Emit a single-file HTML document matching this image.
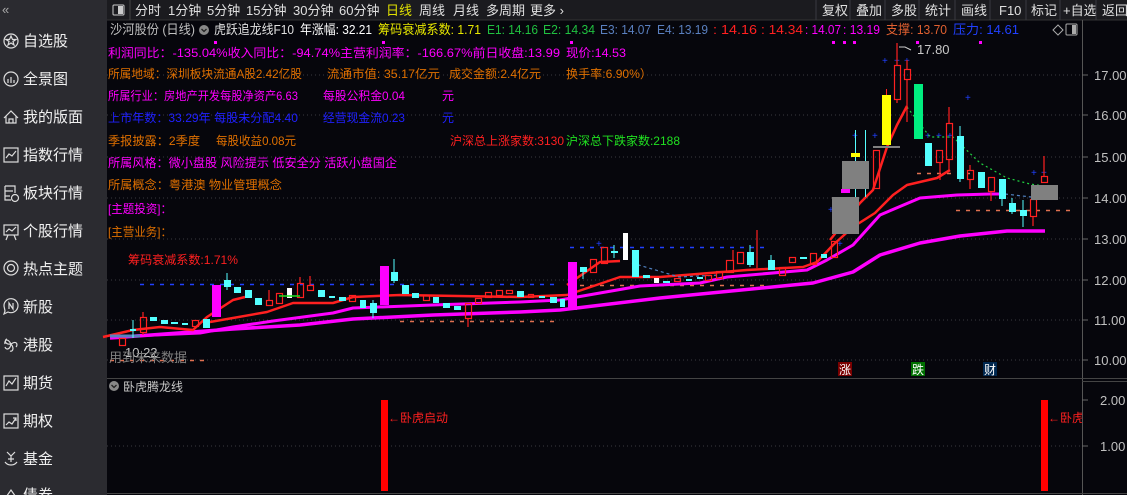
<!DOCTYPE html>
<html><head><meta charset="utf-8"><style>
html,body{margin:0;padding:0;background:#06060c;width:1127px;height:495px;overflow:hidden}
svg{display:block}
text{font-family:"Liberation Sans","Noto Sans CJK SC",sans-serif}
</style></head><body>
<svg width="1127" height="495" viewBox="0 0 1127 495" xmlns="http://www.w3.org/2000/svg">
<rect width="1127" height="495" fill="#06060c"/>
<!-- sidebar -->
<rect x="0" y="0" width="107" height="495" fill="#2b2b30"/>
<text x="2" y="14" font-size="13" fill="#aaa">«</text>
<g font-size="15" fill="#f0f0f0">
<text x="23" y="46">自选股</text><text x="23" y="84">全景图</text><text x="23" y="122">我的版面</text>
<text x="23" y="160">指数行情</text><text x="23" y="198">板块行情</text><text x="23" y="236">个股行情</text>
<text x="23" y="274">热点主题</text><text x="23" y="312">新股</text><text x="23" y="350">港股</text>
<text x="23" y="388">期货</text><text x="23" y="426">期权</text><text x="23" y="464">基金</text><text x="23" y="500">债券</text>
</g>
<g fill="none" stroke="#ddd" stroke-width="1.2">
<circle cx="11" cy="41" r="7"/><path d="M11 36l1.5 3.5h3.5l-3 2 1 3.5-3-2-3 2 1-3.5-3-2h3.5z"/>
<circle cx="11" cy="79" r="7"/><path d="M8 83v-4M11 83v-6M14 83v-3"/>
<path d="M4 118l7-7 7 7M6 116v7h10v-7M9 123v-4h4v4"/>
<rect x="4" y="148" width="14" height="14"/><path d="M6 158l3-4 3 2 4-5"/>
<path d="M5 186h10v7M5 186v14h6M5 191h8M5 196h5"/><circle cx="15" cy="198" r="3.5"/>
<rect x="4" y="225" width="14" height="10"/><path d="M6 232l3-3 3 2 4-4M8 235l-2 5M14 235l2 5"/>
<circle cx="11" cy="268" r="7"/><circle cx="11" cy="268" r="3.5"/>
<path d="M4 306a7 7 0 1 1 4 6l-4 2 1-3z"/><path d="M9 309v-6l4 6v-6"/>
<path d="M11 344c-4-7-7-3-6 0M11 344c6-4 7 1 5 3M11 344c-1 6-5 6-6 3M11 344c4 5 1 8-1 7M11 344c-6 1-7-4-4-5"/>
<rect x="4" y="376" width="14" height="14"/><path d="M6 386l3-5 3 3 4-6"/>
<rect x="4" y="414" width="14" height="14"/><path d="M6 425l3-3 3 2 4-6M13 418h3v3"/>
<path d="M7 452l4 4 4-4M11 456v6M8 459h6M5 462c3 4 9 4 12 0"/>
<path d="M4 500l7-10 7 10"/>
</g>
<!-- top toolbar -->
<rect x="107" y="0" width="1020" height="20" fill="#1b1b1f"/>
<line x1="107" y1="20" x2="1127" y2="20" stroke="#333"/>
<rect x="113" y="5" width="11" height="10" fill="none" stroke="#ccc" rx="1"/><rect x="118" y="6" width="5" height="8" fill="#ccc"/>
<line x1="130" y1="0" x2="130" y2="20" stroke="#444"/>
<g font-size="13" fill="#e0e0e0">
<text x="135" y="15">分时</text><text x="168" y="15">1分钟</text><text x="207" y="15">5分钟</text><text x="246" y="15">15分钟</text>
<text x="293" y="15">30分钟</text><text x="339" y="15">60分钟</text><text x="386" y="15" fill="#e0e000">日线</text>
<text x="419" y="15">周线</text><text x="453" y="15">月线</text><text x="486" y="15">多周期</text><text x="530" y="15">更多 ›</text>
<text x="822" y="15">复权</text><text x="856" y="15">叠加</text><text x="891" y="15">多股</text><text x="925" y="15">统计</text>
<text x="961" y="15">画线</text><text x="999" y="15">F10</text><text x="1031" y="15">标记</text><text x="1063" y="15">+自选</text><text x="1102" y="15">返回</text>
</g>
<g stroke="#3a3a40"><line x1="816" y1="0" x2="816" y2="20"/><line x1="850" y1="0" x2="850" y2="20"/><line x1="885" y1="0" x2="885" y2="20"/><line x1="919" y1="0" x2="919" y2="20"/><line x1="955" y1="0" x2="955" y2="20"/><line x1="990" y1="0" x2="990" y2="20"/><line x1="1026" y1="0" x2="1026" y2="20"/><line x1="1060" y1="0" x2="1060" y2="20"/><line x1="1096" y1="0" x2="1096" y2="20"/></g>
<!-- grid -->
<g stroke="#3a3a40" stroke-dasharray="1 3">
<line x1="107" y1="75" x2="1082" y2="75"/><line x1="107" y1="115" x2="1082" y2="115"/><line x1="107" y1="157" x2="1082" y2="157"/><line x1="107" y1="198" x2="1082" y2="198"/><line x1="107" y1="239" x2="1082" y2="239"/><line x1="107" y1="280" x2="1082" y2="280"/><line x1="107" y1="320" x2="1082" y2="320"/><line x1="107" y1="360" x2="1082" y2="360"/><line x1="107" y1="446" x2="1082" y2="446"/>
</g>
<!-- axis -->
<line x1="1082.5" y1="20" x2="1082.5" y2="495" stroke="#555"/>
<line x1="107" y1="378.5" x2="1127" y2="378.5" stroke="#444"/>
<line x1="1082" y1="381.5" x2="1127" y2="381.5" stroke="#444"/>
<line x1="107" y1="493.5" x2="1127" y2="493.5" stroke="#444"/>
<g stroke="#666"><line x1="1082" y1="75" x2="1088" y2="75"/><line x1="1082" y1="115" x2="1088" y2="115"/><line x1="1082" y1="157" x2="1088" y2="157"/><line x1="1082" y1="198" x2="1088" y2="198"/><line x1="1082" y1="239" x2="1088" y2="239"/><line x1="1082" y1="280" x2="1088" y2="280"/><line x1="1082" y1="320" x2="1088" y2="320"/><line x1="1082" y1="360" x2="1088" y2="360"/><line x1="1082" y1="400" x2="1088" y2="400"/><line x1="1082" y1="446" x2="1088" y2="446"/></g>
<g font-size="13" fill="#c0c0c0">
<text x="1094" y="80">17.00</text><text x="1094" y="120">16.00</text><text x="1094" y="162">15.00</text><text x="1094" y="203">14.00</text><text x="1094" y="244">13.00</text><text x="1094" y="285">12.00</text><text x="1094" y="325">11.00</text><text x="1094" y="365">10.00</text>
<text x="1100" y="405">2.00</text><text x="1100" y="451">1.00</text>
</g>
<!-- info line -->
<g font-size="13">
<text x="110" y="34" fill="#c0c0c0" textLength="85" lengthAdjust="spacingAndGlyphs">沙河股份 (日线)</text>
<circle cx="204" cy="30" r="5" fill="#888"/><path d="M201.5 29l2.5 2.5 2.5-2.5" stroke="#222" fill="none" stroke-width="1.3"/>
<text x="214" y="34" fill="#e0e0e0" textLength="80" lengthAdjust="spacingAndGlyphs">虎跃追龙线F10</text>
<text x="300" y="34" fill="#fff" textLength="72" lengthAdjust="spacingAndGlyphs">年涨幅: 32.21</text>
<text x="378" y="34" fill="#e8e800" textLength="103" lengthAdjust="spacingAndGlyphs">筹码衰减系数: 1.71</text>
<text x="487" y="34" fill="#20c040" textLength="51" lengthAdjust="spacingAndGlyphs">E1: 14.16</text><text x="543" y="34" fill="#20c040" textLength="52" lengthAdjust="spacingAndGlyphs">E2: 14.34</text>
<text x="600" y="34" fill="#5a80c0" textLength="51" lengthAdjust="spacingAndGlyphs">E3: 14.07</text><text x="657" y="34" fill="#5a80c0" textLength="51" lengthAdjust="spacingAndGlyphs">E4: 13.19</text>
<text x="713" y="34" fill="#ff2020" textLength="44" lengthAdjust="spacingAndGlyphs">: 14.16</text><text x="761" y="34" fill="#ff2020" textLength="42" lengthAdjust="spacingAndGlyphs">: 14.34</text>
<text x="805" y="34" fill="#ff00ff" textLength="36" lengthAdjust="spacingAndGlyphs">: 14.07</text><text x="843" y="34" fill="#ff00ff" textLength="37" lengthAdjust="spacingAndGlyphs">: 13.19</text>
<text x="886" y="34" fill="#e06030" textLength="61" lengthAdjust="spacingAndGlyphs">支撑: 13.70</text><text x="953" y="34" fill="#2040ff" textLength="66" lengthAdjust="spacingAndGlyphs">压力: 14.61</text>
</g>
<path d="M1053 30l5-5 5 5-5 5z" fill="none" stroke="#aaa"/>
<rect x="1066" y="24" width="11" height="11" fill="none" stroke="#aaa" rx="1"/><rect x="1072" y="25" width="4" height="9" fill="#aaa"/>
<g fill="#ff00ff"><rect x="214" y="41" width="3" height="3"/><rect x="382" y="41" width="3" height="3"/><rect x="570" y="41" width="3" height="3"/><rect x="832" y="41" width="3" height="3"/><rect x="843" y="41" width="3" height="3"/><rect x="853" y="41" width="3" height="3"/><rect x="916" y="41" width="3" height="3"/><rect x="979" y="41" width="3" height="3"/></g>
<!-- text rows -->
<g font-size="12" lengthAdjust="spacingAndGlyphs">
<text x="108" y="57" fill="#ff00ff" textLength="452" lengthAdjust="spacingAndGlyphs">利润同比：-135.04%收入同比：-94.74%主营利润率：-166.67%前日收盘:13.99</text>
<text x="566" y="57" fill="#ff00ff" textLength="60" lengthAdjust="spacingAndGlyphs">现价:14.53</text>
<text x="108" y="78" fill="#e07000" textLength="194" lengthAdjust="spacingAndGlyphs">所属地域：深圳板块流通A股2.42亿股</text>
<text x="327" y="78" fill="#e07000" textLength="113" lengthAdjust="spacingAndGlyphs">流通市值: 35.17亿元</text><text x="449" y="78" fill="#e07000" textLength="92" lengthAdjust="spacingAndGlyphs">成交金额:2.4亿元</text>
<text x="566" y="78" fill="#e07000" textLength="86" lengthAdjust="spacingAndGlyphs">换手率:6.90%）</text>
<text x="108" y="100" fill="#ff00ff" textLength="190" lengthAdjust="spacingAndGlyphs">所属行业：房地产开发每股净资产6.63</text>
<text x="323" y="100" fill="#ff00ff" textLength="82" lengthAdjust="spacingAndGlyphs">每股公积金0.04</text><text x="442" y="100" fill="#ff00ff">元</text>
<text x="108" y="122" fill="#2020ff" textLength="190" lengthAdjust="spacingAndGlyphs">上市年数：33.29年 每股未分配4.40</text>
<text x="323" y="122" fill="#2020ff" textLength="82" lengthAdjust="spacingAndGlyphs">经营现金流0.23</text><text x="442" y="122" fill="#2020ff">元</text>
<text x="108" y="145" fill="#e07000" textLength="92" lengthAdjust="spacingAndGlyphs">季报披露：2季度</text><text x="216" y="145" fill="#e07000" textLength="80" lengthAdjust="spacingAndGlyphs">每股收益0.08元</text>
<text x="450" y="145" fill="#ff2020" textLength="114" lengthAdjust="spacingAndGlyphs">沪深总上涨家数:3130</text><text x="566" y="145" fill="#20e020" textLength="114" lengthAdjust="spacingAndGlyphs">沪深总下跌家数:2188</text>
<text x="108" y="167" fill="#ff00ff" textLength="289" lengthAdjust="spacingAndGlyphs">所属风格：微小盘股 风险提示 低安全分 活跃小盘国企</text>
<text x="108" y="189" fill="#e07000" textLength="174" lengthAdjust="spacingAndGlyphs">所属概念：粤港澳 物业管理概念</text>
<text x="108" y="213" fill="#ff00ff" textLength="64" lengthAdjust="spacingAndGlyphs">[主题投资]：</text>
<text x="108" y="236" fill="#e07000" textLength="64" lengthAdjust="spacingAndGlyphs">[主营业务]：</text>
<text x="128" y="264" fill="#ff2020" textLength="110" lengthAdjust="spacingAndGlyphs">筹码衰减系数:1.71%</text>
</g>
<!-- dot rows -->
<g stroke-width="1.5" stroke-dasharray="4 6">
<line x1="140" y1="284.5" x2="560" y2="284.5" stroke="#2040ff"/>
<line x1="570" y1="247.5" x2="765" y2="247.5" stroke="#2040ff"/>
<line x1="400" y1="321.5" x2="560" y2="321.5" stroke="#e07050"/>
<line x1="570" y1="285.5" x2="770" y2="285.5" stroke="#e07050"/>
<line x1="110" y1="360.5" x2="210" y2="360.5" stroke="#e07050"/>
<line x1="956" y1="210.5" x2="1070" y2="210.5" stroke="#e07050"/>
<line x1="917" y1="173.5" x2="970" y2="173.5" stroke="#e07050"/>
<line x1="108" y1="335.5" x2="130" y2="335.5" stroke="#2040ff"/>
</g>
<g fill="#2040ff" font-size="10"><text x="882" y="64">+</text><text x="894" y="64">+</text><text x="904" y="64">+</text><text x="852" y="139">+</text><text x="872" y="139">+</text><text x="925" y="139">+</text><text x="936" y="139">+</text><text x="947" y="139">+</text><text x="965" y="101">+</text><text x="842" y="176">+</text><text x="862" y="176">+</text><text x="828" y="213">+</text><text x="1031" y="176">+</text><text x="1041" y="176">+</text><text x="596" y="247">+</text><text x="837" y="247">+</text></g>
<!-- MA lines -->
<g fill="none" stroke-linejoin="round">
<path d="M110 337L200 333L233 327L273 321L333 313L353 308L433 305L520 302L560 300L640 286L700 283L727 277L807 270L827 260L853 245L880 215L920 198L957 195L990 194L1005 194" stroke="#ff00ff" stroke-width="3"/>
<path d="M110 338L233 329L300 325L353 319L433 315L520 312L560 310L660 298L813 283L853 272L880 255L920 243L960 236L1007 231L1045 231" stroke="#ff00ff" stroke-width="3.5"/>
<path d="M103 337L133 330L160 327L193 330L207 317L233 300L245 297" stroke="#ff2020" stroke-width="2.5"/>
<path d="M210 322L267 312L293 303L333 303L353 297L400 295L520 297L567 295L620 277L660 277L747 270L803 267L817 262L833 245L853 227L875 213L893 195L907 185L937 178L950 170" stroke="#ff2020" stroke-width="2.5"/>
<path d="M567 285L600 262L620 261" stroke="#ff2020" stroke-width="2.5"/>
<path d="M830 240L860 203L873 190L887 147L897 125L907 106" stroke="#ff2020" stroke-width="2.5"/>
<path d="M907 107L930 137L953 137L980 163L1007 178L1030 184L1045 186" stroke="#20d040" stroke-dasharray="2 3" stroke-width="1.2"/>
<path d="M632 263L679 277L720 275M1005 194L1031 197" stroke="#5080c0" stroke-dasharray="3 3" stroke-width="1.2"/>
<path d="M110 336h30" stroke="#5a80c0" stroke-width="3"/>
</g>
<!-- candles: solid cyan -->
<g fill="#54ffff">
<rect x="130" y="329" width="6" height="2"/><rect x="150" y="317" width="7" height="4"/><rect x="161" y="320" width="7" height="4"/><rect x="171" y="322" width="7" height="2"/><rect x="182" y="323" width="6" height="2"/><rect x="203" y="319" width="7" height="9"/>
<rect x="224" y="280" width="7" height="7"/><rect x="234" y="287" width="7" height="6"/><rect x="245" y="290" width="7" height="8"/><rect x="255" y="298" width="7" height="7"/><rect x="318" y="290" width="7" height="7"/><rect x="329" y="296" width="6" height="2"/><rect x="339" y="297" width="7" height="4"/><rect x="360" y="300" width="6" height="8"/><rect x="370" y="303" width="7" height="10"/>
<rect x="391" y="272" width="7" height="9"/><rect x="402" y="285" width="7" height="9"/><rect x="412" y="293" width="7" height="5"/><rect x="433" y="297" width="6" height="6"/><rect x="443" y="303" width="7" height="5"/><rect x="454" y="306" width="7" height="4"/><rect x="517" y="291" width="7" height="6"/><rect x="539" y="296" width="6" height="2"/><rect x="550" y="297" width="7" height="6"/><rect x="560" y="299" width="5" height="8"/>
<rect x="580" y="267" width="7" height="5"/><rect x="611" y="251" width="7" height="2"/><rect x="632" y="250" width="7" height="27"/><rect x="643" y="275" width="7" height="3"/><rect x="663" y="281" width="7" height="2"/><rect x="686" y="279" width="6" height="2"/><rect x="697" y="277" width="6" height="2"/><rect x="747" y="252" width="7" height="13"/><rect x="768" y="260" width="7" height="10"/><rect x="800" y="257" width="7" height="2"/><rect x="821" y="254" width="6" height="4"/>
<rect x="925" y="143" width="7" height="23"/><rect x="957" y="136" width="7" height="43"/><rect x="978" y="172" width="7" height="16"/><rect x="999" y="179" width="7" height="20"/><rect x="1009" y="203" width="7" height="9"/><rect x="1020" y="210" width="7" height="6"/>
</g>
<g stroke="#54ffff" stroke-width="1">
<line x1="133" y1="320" x2="133" y2="338"/><line x1="227" y1="273" x2="227" y2="290"/><line x1="373" y1="300" x2="373" y2="318"/><line x1="394" y1="259" x2="394" y2="283"/><line x1="583" y1="267" x2="583" y2="279"/><line x1="614" y1="245" x2="614" y2="258"/><line x1="750" y1="245" x2="750" y2="267"/><line x1="771" y1="255" x2="771" y2="270"/><line x1="855.5" y1="130" x2="855.5" y2="197"/><line x1="865.5" y1="130" x2="865.5" y2="197"/><line x1="960" y1="126" x2="960" y2="182"/><line x1="1002" y1="179" x2="1002" y2="206"/><line x1="1023" y1="200" x2="1023" y2="227"/><line x1="1012" y1="198" x2="1012" y2="214"/>
</g>
<!-- hollow red -->
<g fill="none" stroke="#ff2020" stroke-width="1.2">
<rect x="119.5" y="338.5" width="6" height="7"/><rect x="140.5" y="317.5" width="6" height="15"/><rect x="192.5" y="320.5" width="6" height="6"/><rect x="266.5" y="300.5" width="6" height="5"/><rect x="276.5" y="293.5" width="6" height="10"/><rect x="297.5" y="283.5" width="6" height="14"/><rect x="307.5" y="285.5" width="6" height="5"/><rect x="349.5" y="295.5" width="6" height="6"/><rect x="423.5" y="295.5" width="6" height="5"/><rect x="465.5" y="303.5" width="6" height="15"/><rect x="475.5" y="298.5" width="6" height="5"/><rect x="485.5" y="292.5" width="6" height="5"/><rect x="496.5" y="290.5" width="6" height="5"/><rect x="506.5" y="290.5" width="6" height="3"/><rect x="528.5" y="294.5" width="5" height="3"/>
<rect x="590.5" y="259.5" width="6" height="13"/><rect x="601.5" y="247.5" width="6" height="16"/><rect x="674.5" y="278.5" width="6" height="3"/><rect x="705.5" y="275.5" width="6" height="5"/><rect x="716.5" y="271.5" width="6" height="7"/><rect x="726.5" y="260.5" width="7" height="12"/><rect x="737.5" y="252.5" width="6" height="11"/><rect x="779.5" y="267.5" width="6" height="8"/><rect x="789.5" y="257.5" width="6" height="5"/><rect x="810.5" y="253.5" width="6" height="11"/><rect x="831.5" y="241.5" width="6" height="16"/>
<rect x="873.5" y="150.5" width="6" height="38"/><rect x="894.5" y="65.5" width="6" height="34"/><rect x="904.5" y="69.5" width="6" height="10"/><rect x="936.5" y="150.5" width="6" height="12"/><rect x="946.5" y="123.5" width="6" height="36"/><rect x="967.5" y="170.5" width="6" height="9"/><rect x="988.5" y="177.5" width="6" height="14"/><rect x="1030.5" y="199.5" width="6" height="17"/><rect x="1041.5" y="176.5" width="6" height="6"/>
<path d="M143 312v5M143 332v3M269 290v10M300 277v6M310 276v9M468 318v9M757 230v38M733 250v10M897 43v22M897 99v4M907 60v9M907 79v43M940 162v18M949 107v16M949 159v11M970 165v5M970 179v10M991 191v10M1033 216v10M1044 156v20"/>
</g>
<!-- special bars -->
<g>
<rect x="212" y="285" width="9" height="32" fill="#ff00ff"/><rect x="380" y="266" width="9" height="39" fill="#ff00ff"/><rect x="568" y="262" width="9" height="48" fill="#ff00ff"/>
<rect x="287" y="288" width="5" height="10" fill="#fff"/><rect x="623" y="233" width="5" height="27" fill="#fff"/><rect x="654" y="278" width="5" height="5" fill="#fff"/>
<line x1="279" y1="296" x2="300" y2="296" stroke="#20e020" stroke-width="1.5"/>
<rect x="832" y="197" width="27" height="37" fill="#808080"/><rect x="842" y="161" width="27" height="28" fill="#808080"/>
<rect x="841" y="189" width="9" height="4" fill="#ff00ff"/><rect x="851" y="153" width="9" height="4" fill="#ffff00"/>
<rect x="882" y="95" width="9" height="50" fill="#ffff00"/><line x1="886.5" y1="89" x2="886.5" y2="95" stroke="#ff2020"/>
<rect x="873" y="146" width="27" height="2" fill="#808080"/>
<rect x="914" y="84" width="9" height="55" fill="#00ee80"/>
<rect x="1031" y="185" width="27" height="15" fill="#808080"/>
</g>
<g font-size="13" fill="#c8c8c8"><text x="917" y="54">17.80</text><text x="125" y="357">10.22</text></g>
<path d="M899 47h6l6 3" stroke="#ccc" fill="none"/>
<text x="109" y="362" font-size="13" fill="#808080">用到未来数据</text>
<!-- markers -->
<rect x="838" y="362" width="14" height="14" fill="#7a0000"/><text x="839" y="374" font-size="12" fill="#fff">涨</text>
<rect x="911" y="362" width="14" height="14" fill="#007000"/><text x="912" y="374" font-size="12" fill="#fff">跌</text>
<rect x="983" y="362" width="14" height="14" fill="#002850"/><text x="984" y="374" font-size="12" fill="#fff">财</text>
<!-- sub chart -->
<circle cx="114" cy="386" r="5" fill="#888"/><path d="M111.5 385l2.5 2.5 2.5-2.5" stroke="#222" fill="none" stroke-width="1.3"/>
<text x="123" y="391" font-size="12" fill="#c8c8c8">卧虎腾龙线</text>
<rect x="381" y="400" width="7" height="91" fill="#ff0000"/><rect x="1041" y="400" width="7" height="91" fill="#ff0000"/>
<text x="388" y="422" font-size="12" fill="#ff2020">←卧虎启动</text>
<svg x="1048" y="405" width="34" height="25"><text x="0" y="17" font-size="12" fill="#ff2020">←卧虎</text></svg>
</svg>
</body></html>
